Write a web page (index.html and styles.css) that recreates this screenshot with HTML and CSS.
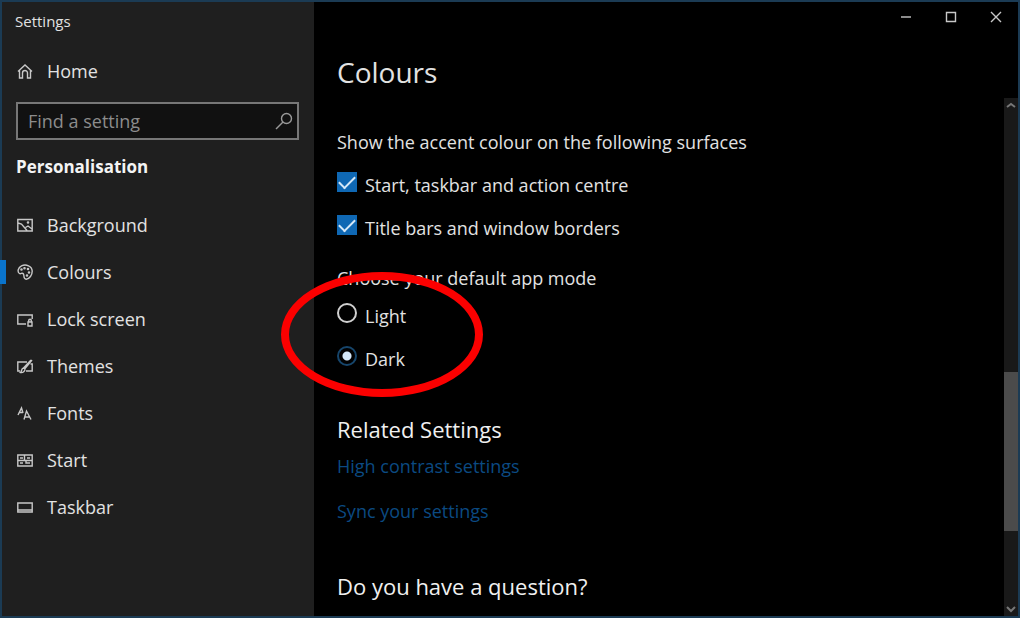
FILE: index.html
```
<!DOCTYPE html>
<html lang="en-GB">
<head>
    <meta charset="UTF-8">
    <meta name="viewport" content="width=device-width, initial-scale=1.0">
    <title>Settings</title>
    <link rel="stylesheet" href="styles.css">
</head>
<body>
    <div class="window">
        <!-- Left hand navigation -->
        <aside class="sidebar">
            <div class="window-title">Settings</div>

            <a class="nav-item home" href="#">
                <svg class="icon" viewBox="0 0 16 16"><path d="M1 8.500L8 2l7 6.500M2.500 7.500v7.500h3V10a2.500 2.500 0 0 1 5 0v5h3V7.500"/></svg>
                Home
            </a>

            <div class="search">
                <input type="text" placeholder="Find a setting" aria-label="Find a setting">
                <svg class="search-icon" viewBox="0 0 18 18"><circle cx="11.500" cy="6.500" r="5"/><path d="M8 10L1 17"/></svg>
            </div>

            <h2 class="section-name">Personalisation</h2>

            <nav class="nav">
                <a class="nav-item" href="#">
                    <svg class="icon" viewBox="0 0 16 16"><path d="M.8 2.500h14.400v11.500H.8zM1 6l3.500 1 5.500 6.500M8.500 10.500L11 9l4 3"/><circle cx="11" cy="5.500" r=".6"/></svg>
                    Background
                </a>
                <a class="nav-item active" href="#">
                    <svg class="icon" viewBox="0 0 16 16"><path d="M6.500 10C5 8 4 10.500 2.500 9.500 0 8 1 3.500 4.500 1.800 9-.2 15 2 15.200 7c.1 4-2.700 8-6 8.200C6 15 7.500 12 6.500 10z"/><circle cx="4.500" cy="5.500" r=".6"/><circle cx="7.500" cy="4.200" r=".6"/><circle cx="11" cy="5" r=".6"/><circle cx="12" cy="8.500" r=".6"/><circle cx="10" cy="11.500" r=".6"/></svg>
                    Colours
                </a>
                <a class="nav-item" href="#">
                    <svg class="icon" viewBox="0 0 16 16"><path d="M9 13H.8V4h14.400v4M4 13h5M11 11h4v4h-4zM11.700 11V9.500a1.300 1.300 0 0 1 2.600 0V11"/></svg>
                    Lock screen
                </a>
                <a class="nav-item" href="#">
                    <svg class="icon" viewBox="0 0 16 16"><path d="M10 4H.8v9H3M13.500 6h1.700v7H9M15 2L8 10.500M14 2L6.500 10M8 10.500c0 3-2 4.500-4.500 4 1.500-1 .5-4 3-4.500z"/></svg>
                    Themes
                </a>
                <a class="nav-item" href="#">
                    <svg class="icon" viewBox="0 0 16 16"><path d="M1 10L4.500 3l1.500 5M2.500 7.500H6M7 14.500L9.500 6l4.500 8.500M8 12h4.500"/></svg>
                    Fonts
                </a>
                <a class="nav-item" href="#">
                    <svg class="icon" viewBox="0 0 16 16"><path d="M.8 3h14.400v11H.8zM.8 8.500h14.400M7.500 3v5.500M3 6h3M10 6h3M3 11h3M9 8.500V11h4"/></svg>
                    Start
                </a>
                <a class="nav-item" href="#">
                    <svg class="icon" viewBox="0 0 16 16"><path d="M.8 4h14.400v9H.8zM1 11h14"/></svg>
                    Taskbar
                </a>
            </nav>
        </aside>

        <main class="main">
            <div class="window-buttons">
                <button type="button" aria-label="Minimise"><svg viewBox="0 0 12 12"><path d="M1 6h10"/></svg></button>
                <button type="button" aria-label="Maximise"><svg viewBox="0 0 12 12"><path d="M1.500 1.500h9v9h-9z"/></svg></button>
                <button type="button" aria-label="Close"><svg viewBox="0 0 12 12"><path d="M1 1l10 10M11 1L1 11"/></svg></button>
            </div>

            <h1>Colours</h1>

            <div class="scroll-area">
                <div class="content">
                    <fieldset class="group">
                        <legend>Show the accent colour on the following surfaces</legend>
                        <label class="option"><input type="checkbox" checked><span>Start, taskbar and action centre</span></label>
                        <label class="option"><input type="checkbox" checked><span>Title bars and window borders</span></label>
                    </fieldset>

                    <fieldset class="group app-mode">
                        <legend>Choose your default app mode</legend>
                        <label class="option"><input type="radio" name="mode"><span>Light</span></label>
                        <label class="option"><input type="radio" name="mode" checked><span>Dark</span></label>
                        <!-- Red ring around the two modes -->
                        <div class="ring"></div>
                    </fieldset>

                    <h3>Related Settings</h3>
                    <a class="link" href="#">High contrast settings</a>
                    <a class="link" href="#">Sync your settings</a>

                    <h3 class="question">Do you have a question?</h3>
                </div>

                <div class="scrollbar">
                    <svg viewBox="0 0 14 14"><path d="M3 9l4-3 4 3"/></svg>
                    <div class="track"><div class="thumb"></div></div>
                    <svg viewBox="0 0 14 14"><path d="M3 5l4 4 4-4"/></svg>
                </div>
            </div>
        </main>
    </div>
</body>
</html>
```
FILE: styles.css
```
* {
    box-sizing: border-box;
}

body {
    margin: 0;
    background-color: #000000;
    color: #e2e2e2;
    font-family: "Open Sans", "Noto Sans", sans-serif;
    font-size: 18px;
    line-height: 24px;
}

svg {
    fill: none;
    stroke: #c8c8c8;
    stroke-width: 1.4;
}

.window {
    display: flex;
    min-height: 100vh;
    border: 2px solid #1b3b54;
}

/* Sidebar */
.sidebar {
    flex: none;
    width: 312px;
    background-color: #1f1f1f;
}

.window-title {
    padding: 7px 13px;
    font-size: 15px;
}

.nav-item {
    position: relative;
    display: flex;
    align-items: center;
    gap: 14px;
    height: 47px;
    padding: 0 15px;
    color: #e2e2e2;
    text-decoration: none;
}

.home {
    margin-top: 7px;
}

.icon {
    width: 16px;
    height: 16px;
}

/* Accent marker sits over the window border */
.active::before {
    content: "";
    position: absolute;
    left: -2px;
    width: 6px;
    height: 24px;
    background-color: #0a74cc;
}

.search {
    display: flex;
    align-items: center;
    height: 38px;
    margin: 8px 15px 15px 14px;
    padding: 0 4px 0 10px;
    background-color: #111111;
    border: 2px solid #777777;
}

.search input {
    flex: 1;
    min-width: 0;
    padding: 0;
    background: none;
    border: none;
    outline: none;
    color: #e2e2e2;
    font: inherit;
}

.search input::placeholder {
    color: #8c8c8c;
    opacity: 1;
}

.search-icon {
    width: 18px;
    height: 18px;
    stroke: #999999;
}

.section-name {
    margin: 0 14px 22px;
    color: #f4f4f4;
    font-size: 17px;
    font-weight: 700;
}

/* Main panel */
.main {
    display: flex;
    flex: 1;
    flex-direction: column;
}

.window-buttons {
    display: flex;
    justify-content: flex-end;
}

.window-buttons button {
    display: flex;
    align-items: center;
    justify-content: center;
    width: 45px;
    height: 30px;
    padding: 0;
    background: none;
    border: none;
}

.window-buttons svg {
    width: 12px;
    height: 12px;
}

h1 {
    margin: 22px 23px 8px;
    font-size: 28px;
    font-weight: 400;
    line-height: 36px;
}

.scroll-area {
    display: flex;
    flex: 1;
}

.content {
    flex: 1;
    padding: 32px 23px 0;
}

.group {
    position: relative;
    margin: 0 0 8px;
    padding: 0;
    border: none;
}

.group legend {
    margin-bottom: 18px;
    padding: 0;
}

.option {
    display: flex;
    align-items: flex-start;
    gap: 8px;
    height: 43px;
}

.option span {
    padding-top: 1px;
}

.option input {
    flex: none;
    appearance: none;
    width: 20px;
    height: 20px;
    margin: 0;
}

.option input[type="checkbox"] {
    display: flex;
    align-items: center;
    justify-content: center;
    background-color: #0f68b4;
}

.option input[type="checkbox"]:checked::before {
    content: "";
    width: 14px;
    height: 7px;
    margin-bottom: 4px;
    border: solid #d5e8f8;
    border-width: 0 0 2px 2px;
    transform: rotate(-45deg);
}

.option input[type="radio"] {
    border: 2px solid #d0d0d0;
    border-radius: 50%;
}

.option input[type="radio"]:checked {
    border-color: #16456b;
    background: radial-gradient(circle, #d3e6f8 4px, transparent 5px);
}

.app-mode {
    margin-bottom: 26px;
}

.app-mode legend {
    margin-bottom: 13px;
}

.ring {
    position: absolute;
    top: -31px;
    left: -56px;
    width: 202px;
    height: 125px;
    border: 8px solid #fb0000;
    border-radius: 50%;
    pointer-events: none;
}

h3 {
    margin: 0 0 11px;
    color: #f0f0f0;
    font-size: 22px;
    font-weight: 400;
    line-height: 28px;
}

.link {
    display: block;
    width: fit-content;
    margin-bottom: 21px;
    color: #0b4a82;
    text-decoration: none;
}

.question {
    margin: 49px 0 0;
}

/* Scrollbar */
.scrollbar {
    display: flex;
    flex: none;
    flex-direction: column;
    width: 14px;
    background-color: #191919;
}

.scrollbar svg {
    width: 14px;
    height: 14px;
    stroke: #777777;
    stroke-width: 2;
}

.track {
    display: flex;
    flex: 1;
    flex-direction: column;
    justify-content: flex-end;
    padding-bottom: 71px;
}

.thumb {
    height: 38%;
    background-color: #4b4b4b;
}
```
